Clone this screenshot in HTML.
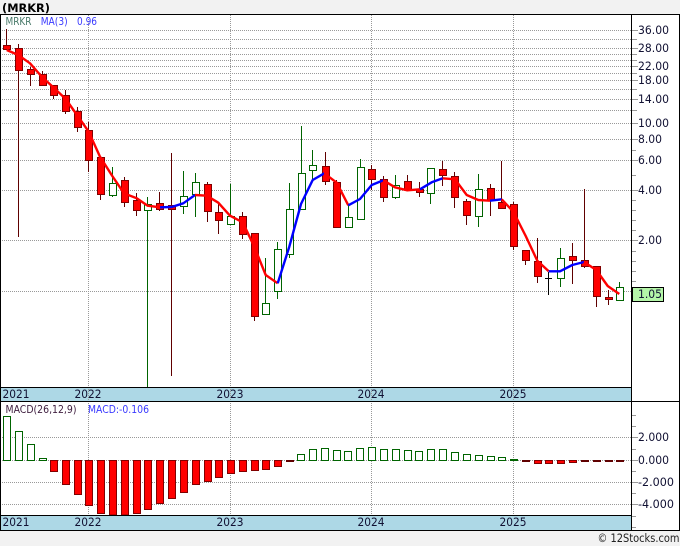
<!DOCTYPE html>
<html><head><meta charset="utf-8"><style>
html,body{margin:0;padding:0;background:#f2f2f2;width:680px;height:546px;overflow:hidden}
svg{display:block}
text{font-family:"DejaVu Sans",sans-serif;font-size:11.5px;fill:#111133}
</style></head><body>
<svg xmlns="http://www.w3.org/2000/svg" width="680" height="546" viewBox="0 0 680 546">
<rect width="680" height="546" fill="#f2f2f2"/>
<rect x="0" y="14" width="680" height="517" fill="#fff"/>
<rect x="1" y="387" width="631" height="14" fill="#add8e6"/>
<rect x="1" y="516" width="631" height="14" fill="#add8e6"/>
<g fill="none" stroke="#999" stroke-dasharray="1 1" shape-rendering="crispEdges">
<path d="M2 30.5H632M2 39.5H632M2 48.5H632M2 54.5H632M2 60.5H632M2 66.5H632M2 73.5H632M2 80.5H632M2 89.5H632M2 99.5H632M2 110.5H632M2 123.5H632M2 139.5H632M2 160.5H632M2 190.5H632M2 240.5H632M2 291.5H632"/>
<path d="M2 437.5H632M2 460.5H632M2 482.5H632M2 504.5H632"/>
<path d="M88.5 15V515M230.5 15V515M371.5 15V515M513.5 15V515"/>
</g>
<g fill="none" stroke="#999" shape-rendering="crispEdges">
<path d="M632 30.5h6M632 39.5h5M632 48.5h6M632 54.5h5M632 60.5h5M632 66.5h6M632 73.5h5M632 80.5h6M632 89.5h5M632 99.5h6M632 110.5h5M632 123.5h6M632 139.5h6M632 150.5h4M632 160.5h6M632 175.5h4M632 190.5h6M632 200.5h4M632 210.5h4M632 220.5h4M632 230.5h4M632 240.5h6M632 251.5h4M632 261.5h4M632 271.5h4M632 281.5h4"/>
<path d="M632 415.5h4M632 426.5h4M632 437.5h6M632 449.5h4M632 460.5h6M632 471.5h4M632 482.5h6M632 493.5h4M632 504.5h6M632 516.5h4M632 527.5h4"/>
</g>
<!-- wicks -->
<path fill="none" stroke="#600000" shape-rendering="crispEdges" d="M6.5 29V50M18.5 44V237M30.5 67V86M42.5 71V86M53.5 85V99M65.5 90V114M77.5 107V132M88.5 122V172M100.5 157V200M124.5 177V207M136.5 193V216M159.5 192V211M171.5 153V376M207.5 182V222M218.5 203V234M242.5 212V239M254.5 233V321M325.5 152V185M336.5 180V227M371.5 165V190M383.5 176V202M407.5 175V189M419.5 182V197M442.5 161V186M454.5 172V208M466.5 199V225M490.5 184V216M501.5 161V209M513.5 202V250M525.5 250V265M537.5 238V283M572.5 243V284M584.5 189V268M596.5 266V307M608.5 290V305"/>
<path fill="none" stroke="#006400" shape-rendering="crispEdges" d="M112.5 167V197M147.5 197V387M183.5 171V214M195.5 173V217M230.5 184V225M265.5 258V314M277.5 242V299M289.5 183V258M301.5 126V209M312.5 150V180M348.5 205V227M360.5 159V219M395.5 175V199M430.5 168V204M478.5 174V227M560.5 248V287M619.5 282V300"/>
<path fill="none" stroke="#000" shape-rendering="crispEdges" d="M548.5 272V295M545 278.5H552"/>
<!-- bodies -->
<path fill="#f00" stroke="#800000" shape-rendering="crispEdges" d="M3.5 45.5h7V49.5h-7zM15.5 48.5h7V70.5h-7zM27.5 69.5h7V74.5h-7zM39.5 74.5h7V85.5h-7zM50.5 85.5h7V95.5h-7zM62.5 95.5h7V111.5h-7zM74.5 111.5h7V127.5h-7zM85.5 130.5h7V160.5h-7zM97.5 157.5h7V194.5h-7zM121.5 180.5h7V202.5h-7zM133.5 200.5h7V210.5h-7zM156.5 203.5h7V209.5h-7zM168.5 205.5h7V209.5h-7zM204.5 184.5h7V211.5h-7zM215.5 212.5h7V220.5h-7zM239.5 216.5h7V234.5h-7zM251.5 233.5h7V316.5h-7zM322.5 166.5h7V181.5h-7zM333.5 182.5h7V227.5h-7zM368.5 169.5h7V179.5h-7zM380.5 179.5h7V197.5h-7zM404.5 181.5h7V189.5h-7zM416.5 189.5h7V192.5h-7zM439.5 169.5h7V175.5h-7zM451.5 176.5h7V197.5h-7zM463.5 201.5h7V215.5h-7zM487.5 188.5h7V200.5h-7zM498.5 202.5h7V208.5h-7zM510.5 204.5h7V246.5h-7zM522.5 250.5h7V260.5h-7zM534.5 261.5h7V276.5h-7zM569.5 256.5h7V260.5h-7zM581.5 260.5h7V266.5h-7zM593.5 266.5h7V296.5h-7zM605.5 297.5h7V299.5h-7z"/>
<path fill="#fff" stroke="#006400" shape-rendering="crispEdges" d="M109.5 183.5h7V195.5h-7zM144.5 204.5h7V210.5h-7zM180.5 196.5h7V206.5h-7zM192.5 182.5h7V194.5h-7zM227.5 216.5h7V224.5h-7zM262.5 303.5h7V314.5h-7zM274.5 249.5h7V291.5h-7zM286.5 209.5h7V254.5h-7zM298.5 173.5h7V209.5h-7zM309.5 165.5h7V170.5h-7zM345.5 217.5h7V227.5h-7zM357.5 167.5h7V219.5h-7zM392.5 185.5h7V197.5h-7zM427.5 168.5h7V193.5h-7zM475.5 189.5h7V216.5h-7zM557.5 258.5h7V278.5h-7zM616.5 287.5h7V300.5h-7z"/>
<!-- MA -->
<g fill="none" stroke-width="2.4" stroke-linejoin="round">
<path stroke="#f00" d="M6.7 50L18.3 55 30 63.3 42 77 53 87 65.7 99 77 115 88.7 131.7 100 156.7 112.3 176 124 193.3 136.7 198.3 147.7 205.7 160 207.3"/>
<path stroke="#00f" d="M160 207.3L171.7 207 183.3 203.3 195 195"/>
<path stroke="#f00" d="M195 195L206.7 195.7 218.3 202.7 230 215.7 242.7 222.3 254.3 246.7 265.7 275 277.7 283.3"/>
<path stroke="#00f" d="M277.7 283.3L289.3 246.7 301 204 312.7 180 324.3 173.3"/>
<path stroke="#f00" d="M324.3 173.3L336.7 182.7 348.3 205.3"/>
<path stroke="#00f" d="M348.3 205.3L360 199 371.7 185 383.3 180.3"/>
<path stroke="#f00" d="M383.3 180.3L395 187.3 407.3 190.3 420 189.3"/>
<path stroke="#00f" d="M420 189.3L431.7 182.3 442.7 178.3"/>
<path stroke="#f00" d="M442.7 178.3L455 179.3 466.7 195 478.3 200 490 200.7"/>
<path stroke="#00f" d="M490 200.7L501.7 199.3"/>
<path stroke="#f00" d="M501.7 199.3L513.3 211.7 525.7 236 537.3 260.7 548.7 271.3"/>
<path stroke="#00f" d="M548.7 271.3L560 271.3 572.3 265 584 262"/>
<path stroke="#f00" d="M584 262L596.3 270 607.7 286 619.3 294"/>
</g>
<!-- MACD -->
<path fill="#fff" stroke="#006400" shape-rendering="crispEdges" d="M3.5 416.5h7V460.5h-7zM15.5 431.5h7V460.5h-7zM27.5 444.5h7V460.5h-7zM39.5 458.5h7V460.5h-7z"/>
<path fill="#f00" stroke="#800000" shape-rendering="crispEdges" d="M50.5 460.5h7V471.5h-7zM62.5 460.5h7V484.5h-7zM74.5 460.5h7V494.5h-7zM85.5 460.5h7V505.5h-7zM97.5 460.5h7V513.5h-7zM109.5 460.5h7V515h-7zM121.5 460.5h7V515h-7zM133.5 460.5h7V513.5h-7zM144.5 460.5h7V509.5h-7zM156.5 460.5h7V503.5h-7zM168.5 460.5h7V498.5h-7zM180.5 460.5h7V492.5h-7zM192.5 460.5h7V484.5h-7zM204.5 460.5h7V481.5h-7zM215.5 460.5h7V477.5h-7zM227.5 460.5h7V473.5h-7zM239.5 460.5h7V471.5h-7zM251.5 460.5h7V470.5h-7zM262.5 460.5h7V469.5h-7zM274.5 460.5h7V466.5h-7zM534.5 460.5h7V463.5h-7zM545.5 460.5h7V463.5h-7zM557.5 460.5h7V463.5h-7zM569.5 460.5h7V462.5h-7z"/>
<path fill="#fff" stroke="#006400" shape-rendering="crispEdges" d="M297.5 454.5h7V460.5h-7zM309.5 449.5h7V460.5h-7zM321.5 448.5h7V460.5h-7zM333.5 450.5h7V460.5h-7zM344.5 451.5h7V460.5h-7zM356.5 448.5h7V460.5h-7zM368.5 447.5h7V460.5h-7zM380.5 449.5h7V460.5h-7zM392.5 449.5h7V460.5h-7zM404.5 450.5h7V460.5h-7zM415.5 451.5h7V460.5h-7zM427.5 449.5h7V460.5h-7zM439.5 449.5h7V460.5h-7zM451.5 452.5h7V460.5h-7zM463.5 454.5h7V460.5h-7zM475.5 455.5h7V460.5h-7zM487.5 456.5h7V460.5h-7zM498.5 457.5h7V460.5h-7z"/>
<path fill="#006400" stroke="#006400" shape-rendering="crispEdges" d="M510.5 459.5h7V460.5h-7z"/>
<path fill="#600000" stroke="#600000" shape-rendering="crispEdges" d="M286.5 460.5h7V461.5h-7zM522.5 460.5h7V461.5h-7zM581.5 460.5h7V461.5h-7zM593.5 460.5h7V461.5h-7zM605.5 460.5h7V461.5h-7zM616.5 460.5h7V461.5h-7z"/>
<!-- frame -->
<g fill="none" stroke="#000" shape-rendering="crispEdges">
<path d="M0 14.5H680M0.5 14V531M631.5 14V531M679.5 14V531M0 530.5H680M0 387.5H632M0 401.5H680M0 515.5H632"/>
</g>
<!-- 1.05 -->
<rect x="632.5" y="287.5" width="31" height="14" fill="#b4f5a8" stroke="#000" shape-rendering="crispEdges"/>
<text x="638" y="298" textLength="24" lengthAdjust="spacingAndGlyphs">1.05</text>
<!-- labels -->
<text x="638" y="34" textLength="31" lengthAdjust="spacingAndGlyphs">36.00</text>
<text x="638" y="52" textLength="31" lengthAdjust="spacingAndGlyphs">28.00</text>
<text x="638" y="70" textLength="31" lengthAdjust="spacingAndGlyphs">22.00</text>
<text x="638" y="84" textLength="31" lengthAdjust="spacingAndGlyphs">18.00</text>
<text x="638" y="103" textLength="31" lengthAdjust="spacingAndGlyphs">14.00</text>
<text x="638" y="127" textLength="31" lengthAdjust="spacingAndGlyphs">10.00</text>
<text x="638" y="143" textLength="24" lengthAdjust="spacingAndGlyphs">8.00</text>
<text x="638" y="164" textLength="24" lengthAdjust="spacingAndGlyphs">6.00</text>
<text x="638" y="194" textLength="24" lengthAdjust="spacingAndGlyphs">4.00</text>
<text x="638" y="244" textLength="24" lengthAdjust="spacingAndGlyphs">2.00</text>
<text x="638" y="441" textLength="31" lengthAdjust="spacingAndGlyphs">2.000</text>
<text x="638" y="464" textLength="31" lengthAdjust="spacingAndGlyphs">0.000</text>
<text x="638" y="486" textLength="36" lengthAdjust="spacingAndGlyphs">-2.000</text>
<text x="638" y="508" textLength="36" lengthAdjust="spacingAndGlyphs">-4.000</text>
<text x="2.5" y="398" textLength="27" lengthAdjust="spacingAndGlyphs">2021</text>
<text x="74.5" y="398" textLength="27" lengthAdjust="spacingAndGlyphs">2022</text>
<text x="216.5" y="398" textLength="27" lengthAdjust="spacingAndGlyphs">2023</text>
<text x="357.5" y="398" textLength="27" lengthAdjust="spacingAndGlyphs">2024</text>
<text x="499.5" y="398" textLength="27" lengthAdjust="spacingAndGlyphs">2025</text>
<text x="2.5" y="526" textLength="27" lengthAdjust="spacingAndGlyphs">2021</text>
<text x="74.5" y="526" textLength="27" lengthAdjust="spacingAndGlyphs">2022</text>
<text x="216.5" y="526" textLength="27" lengthAdjust="spacingAndGlyphs">2023</text>
<text x="357.5" y="526" textLength="27" lengthAdjust="spacingAndGlyphs">2024</text>
<text x="499.5" y="526" textLength="27" lengthAdjust="spacingAndGlyphs">2025</text>
<text x="2" y="12" textLength="48" lengthAdjust="spacingAndGlyphs" style="font-weight:bold;font-size:11.5px;fill:#000">(MRKR)</text>
<text x="5.5" y="25" textLength="26" lengthAdjust="spacingAndGlyphs" style="font-size:11px;fill:#4a7a6a">MRKR</text>
<text x="40.7" y="25" textLength="27" lengthAdjust="spacingAndGlyphs" style="font-size:11px;fill:#3a3aff">MA(3)</text>
<text x="77" y="25" textLength="20" lengthAdjust="spacingAndGlyphs" style="font-size:11px;fill:#3a3aff">0.96</text>
<text x="5.5" y="413" textLength="71" lengthAdjust="spacingAndGlyphs" style="font-size:11px;fill:#402040">MACD(26,12,9)</text>
<text x="88" y="413" textLength="61" lengthAdjust="spacingAndGlyphs" style="font-size:11px;fill:#3a3aff">MACD:-0.106</text>
<text x="597.5" y="542" textLength="82" lengthAdjust="spacingAndGlyphs" style="font-size:11.5px;fill:#222">© 12Stocks.com</text>
</svg>
</body></html>
